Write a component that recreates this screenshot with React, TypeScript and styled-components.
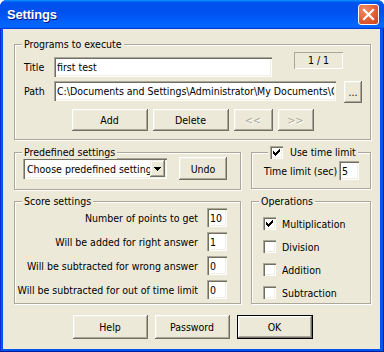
import styled, { createGlobalStyle } from 'styled-components';

const scoreRows = [
    { label: 'Number of points to get', value: '10' },
    { label: 'Will be added for right answer', value: '1' },
    { label: 'Will be subtracted for wrong answer', value: '0' },
    { label: 'Will be subtracted for out of time limit', value: '0' },
];

const operations = [
    { label: 'Multiplication', checked: true },
    { label: 'Division', checked: false },
    { label: 'Addition', checked: false },
    { label: 'Subtraction', checked: false },
];

const Check = ({ checked }: { checked?: boolean }) => (
    <CheckBox>
        {checked && (
            <svg width="7" height="7" viewBox="0 0 7 7" shapeRendering="crispEdges">
                <path d="M0 2 L2 4 L7 -1 L7 2 L2 7 L0 5 Z" fill="#000" />
            </svg>
        )}
    </CheckBox>
);

const App = () => {
    return (
        <>
            <GlobalStyle />
            <Window>
                <TitleBar>
                    <Caption>Settings</Caption>
                    <CloseButton>
                        <svg width="13" height="13" viewBox="0 0 13 13">
                            <path d="M2 2 L11 11 M11 2 L2 11" stroke="#fff" strokeWidth="2.2" strokeLinecap="square" />
                        </svg>
                    </CloseButton>
                </TitleBar>
                <Client>
                    <Group $h={96}>
                        <Legend>Programs to execute</Legend>
                        <TitleRow>
                            <FieldLabel>Title</FieldLabel>
                            <Field $w={218} readOnly value="first test" />
                            <Counter>1 / 1</Counter>
                        </TitleRow>
                        <PathRow>
                            <FieldLabel>Path</FieldLabel>
                            <Field $w={282} readOnly value="C:\Documents and Settings\Administrator\My Documents\Games\quiz.exe" />
                            <Button $w={18} $h={22} style={{ marginLeft: 8 }}>...</Button>
                        </PathRow>
                        <ButtonRow>
                            <Button $w={76}>Add</Button>
                            <Button $w={76}>Delete</Button>
                            <Button $w={39} disabled>&lt;&lt;</Button>
                            <Button $w={36} disabled>&gt;&gt;</Button>
                        </ButtonRow>
                    </Group>

                    <GroupRow $h={38}>
                        <Group $h={38}>
                            <Legend>Predefined settings</Legend>
                            <PresetRow>
                                <Combo>
                                    <ComboText>Choose predefined settings</ComboText>
                                    <ComboButton>
                                        <svg width="7" height="4" viewBox="0 0 7 4" shapeRendering="crispEdges">
                                            <path d="M0 0 H7 L3.5 4 Z" fill="#000" />
                                        </svg>
                                    </ComboButton>
                                </Combo>
                                <Button $w={48} $h={23}>Undo</Button>
                            </PresetRow>
                        </Group>
                        <Group $h={37}>
                            <Legend $left={16}>
                                <Check checked />
                                <span>Use time limit</span>
                            </Legend>
                            <TimeRow>
                                <span>Time limit (sec)</span>
                                <Field $w={20} $h={19} readOnly value="5" />
                            </TimeRow>
                        </Group>
                    </GroupRow>

                    <GroupRow $h={103}>
                        <Group $h={103}>
                            <Legend>Score settings</Legend>
                            <ScoreGrid>
                                {scoreRows.map(row => (
                                    <ScoreRow key={row.label}>
                                        <span>{row.label}</span>
                                        <Field $w={20} $h={19} readOnly value={row.value} />
                                    </ScoreRow>
                                ))}
                            </ScoreGrid>
                        </Group>
                        <Group $h={103}>
                            <Legend>Operations</Legend>
                            <OpsList>
                                {operations.map(op => (
                                    <OpRow key={op.label}>
                                        <Check checked={op.checked} />
                                        <span>{op.label}</span>
                                    </OpRow>
                                ))}
                            </OpsList>
                        </Group>
                    </GroupRow>

                    <DialogButtons>
                        <Button $w={75} $h={24}>Help</Button>
                        <Button $w={75} $h={24}>Password</Button>
                        <Button $w={76} $h={24} $default>OK</Button>
                    </DialogButtons>
                </Client>
            </Window>
        </>
    );
};

const GlobalStyle = createGlobalStyle`
    html, body {
        margin: 0;
        padding: 0;
        background: #ffffff;
    }
    body {
        font-family: "DejaVu Sans Condensed", "DejaVu Sans", sans-serif;
        font-stretch: semi-condensed;
        font-size: 10.5px;
        color: #000;
        white-space: nowrap;
    }
`;

const sunken = `
    box-shadow: inset 1px 1px 0 #aca899, inset 2px 2px 0 #716f64,
        inset -1px -1px 0 #ffffff, inset -2px -2px 0 #f1efe2;
`;

const Window = styled.div`
    width: 384px;
    height: 352px;
    display: flex;
    flex-direction: column;
    background: #0055ea;
    border-radius: 7px 7px 0 0;
    box-shadow: inset -1px -1px 0 #001c9c, inset 1px 0 0 #0831d9;
    overflow: hidden;
`;

const TitleBar = styled.div`
    flex: none;
    height: 29px;
    display: flex;
    align-items: center;
    padding: 0 5px 0 7px;
    box-sizing: border-box;
    background: linear-gradient(180deg, #0997ff, #0053ee 8%, #0050ee 40%, #0066ff 88%, #0066ff 93%, #005bff 95%, #003dd7 96%, #003dd7);
`;

const Caption = styled.span`
    flex: 1;
    color: #ffffff;
    font: bold 13px "Liberation Sans", Arial, sans-serif;
    letter-spacing: -0.2px;
    text-shadow: 1px 1px 0 #0a1883;
`;

const CloseButton = styled.div`
    width: 21px;
    height: 21px;
    box-sizing: border-box;
    border: 1px solid #ffffff;
    border-radius: 3px;
    background: radial-gradient(circle at 30% 25%, #f08a62 0%, #e35d36 55%, #c8421a 100%);
    display: flex;
    align-items: center;
    justify-content: center;
`;

const Client = styled.div`
    flex: 1;
    margin: 0 4px 3px 3px;
    padding: 15px 9px 0 11px;
    background: #ece9d8;
    display: flex;
    flex-direction: column;
`;

const Group = styled.div<{ $h: number }>`
    position: relative;
    box-sizing: border-box;
    height: ${p => p.$h}px;
    border: 1px solid #aca899;
    box-shadow: inset 1px 1px 0 #ffffff, 1px 1px 0 #ffffff;
    display: flex;
    flex-direction: column;
`;

const Legend = styled.div<{ $left?: number }>`
    position: absolute;
    top: -8px;
    left: ${p => p.$left ?? 7}px;
    padding: 0 2px;
    line-height: 14px;
    background: #ece9d8;
    display: flex;
    align-items: center;
    gap: 7px;
`;

const GroupRow = styled.div<{ $h: number }>`
    display: grid;
    grid-template-columns: 227px 120px;
    column-gap: 10px;
    height: ${p => p.$h}px;
    margin-top: 12px;

    & + & {
        margin-top: 11px;
    }
`;

const TitleRow = styled.div`
    display: flex;
    align-items: flex-end;
    height: 25px;
    padding: 7px 0 0 9px;
`;

const PathRow = styled.div`
    display: flex;
    align-items: flex-start;
    padding: 4px 0 0 9px;
`;

const FieldLabel = styled.span`
    width: 30px;
    line-height: 20px;
`;

const Field = styled.input<{ $w: number; $h?: number }>`
    box-sizing: border-box;
    width: ${p => p.$w}px;
    height: ${p => p.$h ?? 20}px;
    flex: none;
    border: none;
    outline: none;
    padding: 0 2px 0 3px;
    margin: 0;
    font: inherit;
    color: #000;
    background: #ffffff;
    ${sunken}
`;

const Counter = styled.div`
    align-self: flex-start;
    box-sizing: border-box;
    width: 49px;
    height: 17px;
    margin-left: 22px;
    line-height: 17px;
    text-align: center;
    box-shadow: inset 1px 1px 0 #aca899, inset -1px -1px 0 #ffffff;
`;

const Button = styled.button<{ $w: number; $h?: number; $default?: boolean }>`
    box-sizing: border-box;
    width: ${p => p.$w}px;
    height: ${p => p.$h ?? 22}px;
    flex: none;
    margin: 0;
    padding: 0;
    font: inherit;
    color: #000;
    background: #ece9d8;
    border: ${p => (p.$default ? '1px solid #000' : 'none')};
    box-shadow: inset -1px -1px 0 #716f64, inset 1px 1px 0 #ffffff,
        inset -2px -2px 0 #aca899, inset 2px 2px 0 #f1efe2;

    &:disabled {
        color: #aca899;
        text-shadow: 1px 1px 0 #ffffff;
    }
`;

const ButtonRow = styled.div`
    display: flex;
    justify-content: center;
    gap: 5px;
    margin-top: 6px;
`;

const PresetRow = styled.div`
    display: flex;
    align-items: center;
    padding: 4px 0 0 8px;
    gap: 12px;
`;

const Combo = styled.div`
    box-sizing: border-box;
    width: 144px;
    height: 21px;
    padding: 2px;
    display: flex;
    align-items: center;
    background: #ffffff;
    ${sunken}
`;

const ComboText = styled.span`
    flex: 1;
    overflow: hidden;
    white-space: nowrap;
    padding-left: 2px;
`;

const ComboButton = styled.span`
    box-sizing: border-box;
    width: 15px;
    height: 17px;
    flex: none;
    display: flex;
    align-items: center;
    justify-content: center;
    background: #ece9d8;
    box-shadow: inset -1px -1px 0 #716f64, inset 1px 1px 0 #f1efe2,
        inset -2px -2px 0 #aca899, inset 2px 2px 0 #ffffff;
`;

const TimeRow = styled.div`
    display: flex;
    align-items: center;
    justify-content: space-between;
    padding: 8px 11px 0 12px;
`;

const ScoreGrid = styled.div`
    display: flex;
    flex-direction: column;
    gap: 5px;
    padding: 6px 13px 0 0;
`;

const ScoreRow = styled.div`
    display: flex;
    align-items: center;
    justify-content: flex-end;
    gap: 9px;
`;

const OpsList = styled.div`
    display: flex;
    flex-direction: column;
    gap: 4px;
    padding: 12px 0 0 11px;
`;

const OpRow = styled.div`
    display: flex;
    align-items: center;
    height: 19px;
    gap: 6px;
`;

const CheckBox = styled.span`
    box-sizing: border-box;
    width: 13px;
    height: 13px;
    flex: none;
    display: flex;
    align-items: center;
    justify-content: center;
    background: #ffffff;
    ${sunken}
`;

const DialogButtons = styled.div`
    display: flex;
    justify-content: center;
    gap: 7px;
    margin-top: 11px;
`;

export default App;
